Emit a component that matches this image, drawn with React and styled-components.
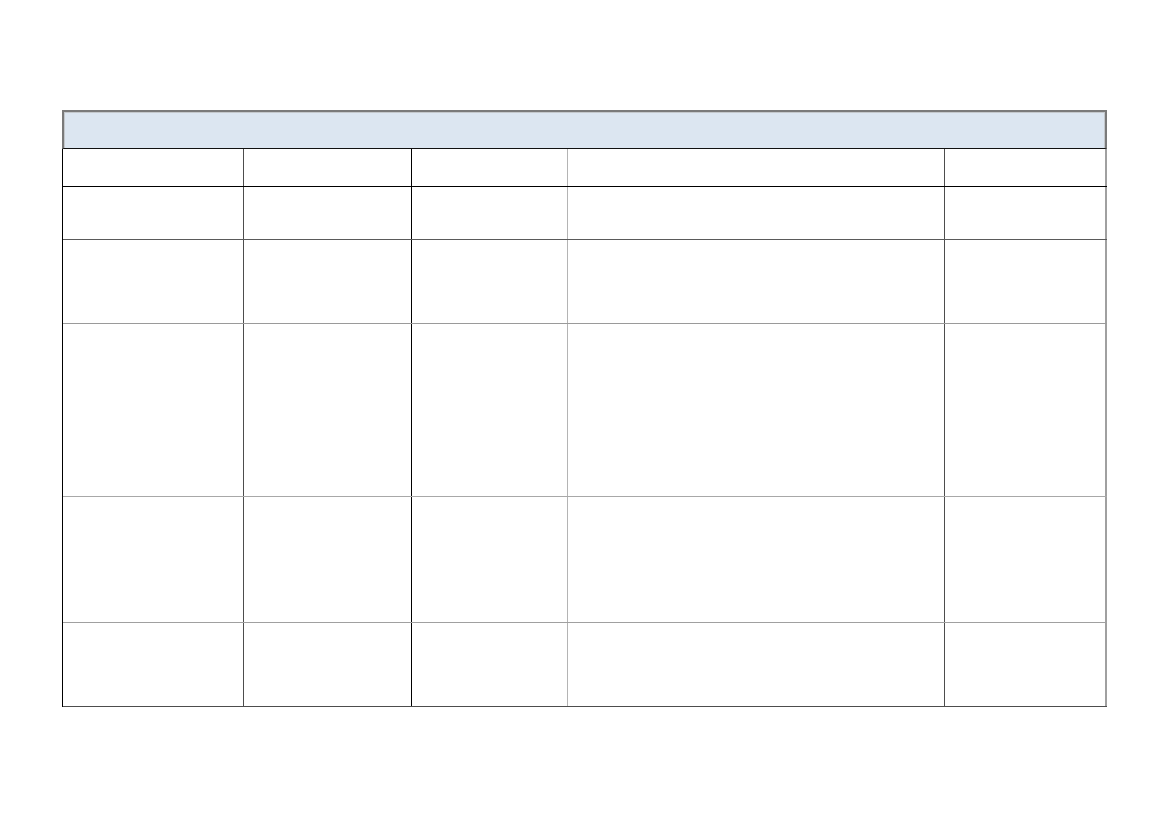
import React from 'react';
import styled, { createGlobalStyle } from 'styled-components';

const GlobalStyle = createGlobalStyle`
  * { box-sizing: border-box; }
  body {
    margin: 0;
    background: #fff;
    font-family: "Liberation Sans", Arial, sans-serif;
  }
`;

const Page = styled.div`
  width: 1169px;
  height: 827px;
  padding: 110px 0 0 62px;
  background: #fff;
`;

const Sheet = styled.div`
  width: 1045px;
  display: flex;
  flex-direction: column;
`;

const TitleBand = styled.div`
  height: 39px;
  background: #dce6f1;
  border: 2px solid #7a7a7a;
  border-bottom: 1px solid #111;
  box-shadow: inset 1px 1px 0 #c4c8cc, inset -1px 0 0 #c4c8cc;
`;

const Body = styled.div`
  border-left: 1px solid #000;
  display: flex;
  flex-direction: column;
`;

const Row = styled.div`
  display: grid;
  grid-template-columns: 181px 168px 156px 377px 162px;
  height: ${(p) => p.$h}px;
  border-bottom: 1px solid ${(p) => p.$line};
`;

const Cell = styled.div`
  border-right: ${(p) => p.$w || 1}px solid ${(p) => p.$line};
`;

const columnLines = [
  { line: '#4d4d4d' },
  { line: '#000' },
  { line: '#b4b4b4' },
  { line: '#4d4d4d' },
  { line: '#a0a0a0', w: 2 },
];

const rows = [
  { h: 38, line: '#000' },
  { h: 53, line: '#5a5a5a' },
  { h: 84, line: '#9a9a9a' },
  { h: 173, line: '#a8a8a8' },
  { h: 126, line: '#a0a0a0' },
  { h: 84, line: '#4d4d4d' },
];

const App = () => {
  return (
    <Page>
      <GlobalStyle />
      <Sheet>
        <TitleBand />
        <Body>
          {rows.map((r, i) => (
            <Row key={i} $h={r.h} $line={r.line}>
              {columnLines.map((c, j) => (
                <Cell key={j} $line={c.line} $w={c.w} />
              ))}
            </Row>
          ))}
        </Body>
      </Sheet>
    </Page>
  );
};

export default App;
